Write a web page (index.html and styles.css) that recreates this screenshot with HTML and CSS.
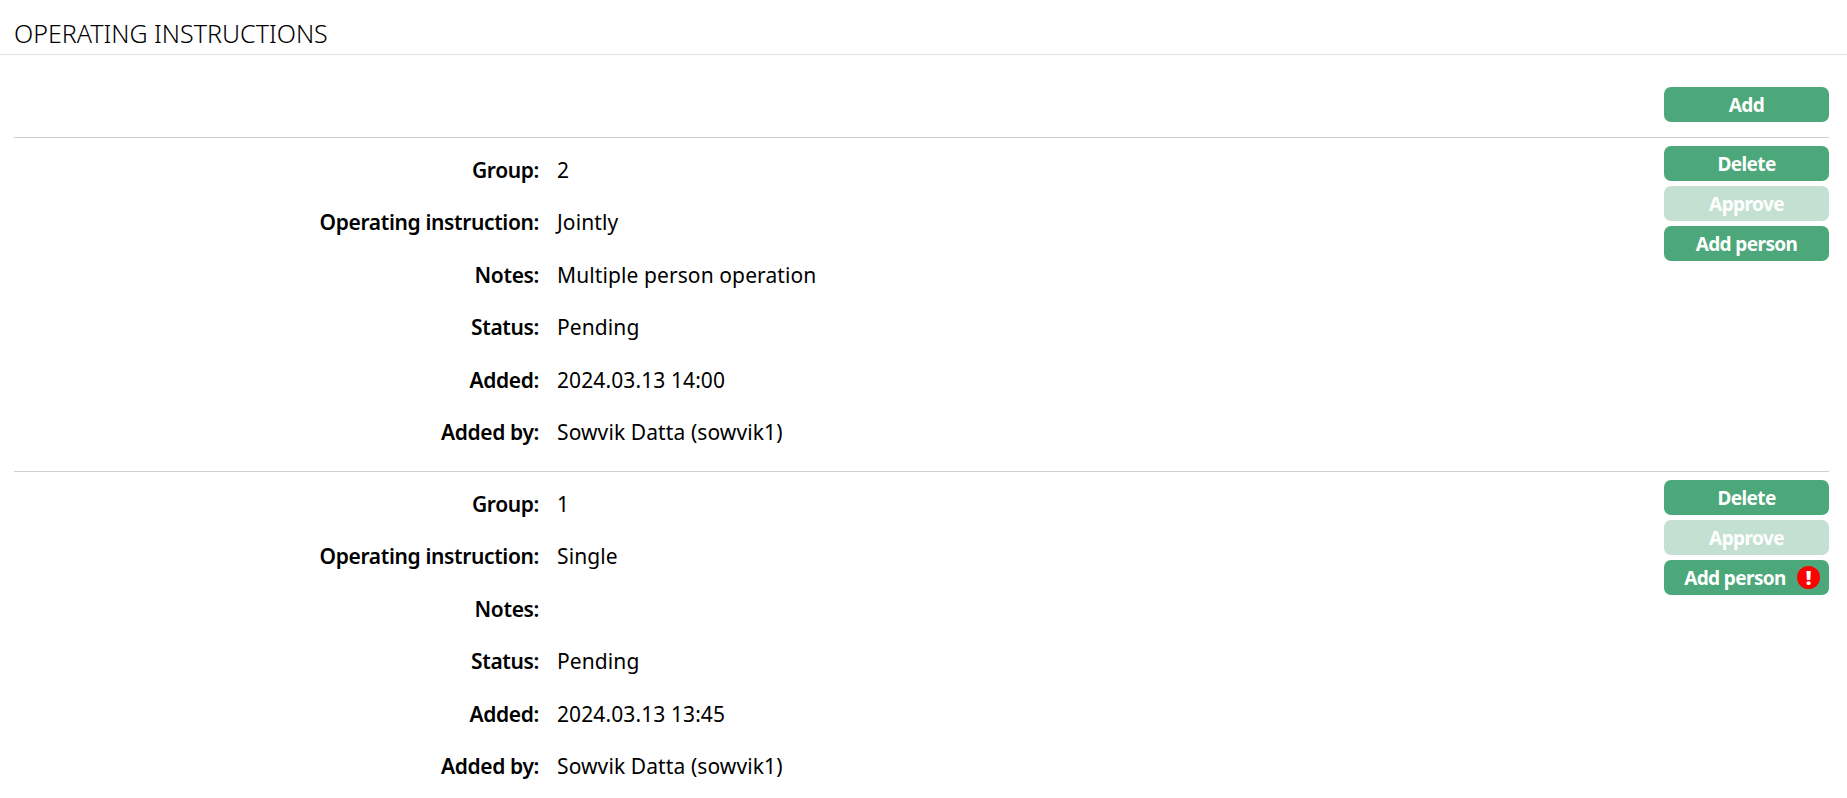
FILE: index.html
```html
<!DOCTYPE html>
<html lang="en">
<head>
  <meta charset="UTF-8" />
  <title>Operating Instructions</title>
  <link rel="stylesheet" href="styles.css">
</head>
<body>

  <div class="page-title">OPERATING INSTRUCTIONS</div>

  <div class="content">
    <div class="toolbar">
      <button class="btn">Add</button>
    </div>

    <!-- Group 2 -->
    <div class="item">
      <dl class="details">
        <dt>Group:</dt><dd>2</dd>
        <dt>Operating instruction:</dt><dd>Jointly</dd>
        <dt>Notes:</dt><dd>Multiple person operation</dd>
        <dt>Status:</dt><dd>Pending</dd>
        <dt>Added:</dt><dd>2024.03.13 14:00</dd>
        <dt>Added by:</dt><dd>Sowvik Datta (sowvik1)</dd>
      </dl>
      <div class="actions">
        <button class="btn">Delete</button>
        <button class="btn disabled">Approve</button>
        <button class="btn">Add person</button>
      </div>
    </div>

    <!-- Group 1 -->
    <div class="item">
      <dl class="details">
        <dt>Group:</dt><dd>1</dd>
        <dt>Operating instruction:</dt><dd>Single</dd>
        <dt>Notes:</dt><dd></dd>
        <dt>Status:</dt><dd>Pending</dd>
        <dt>Added:</dt><dd>2024.03.13 13:45</dd>
        <dt>Added by:</dt><dd>Sowvik Datta (sowvik1)</dd>
      </dl>
      <div class="actions">
        <button class="btn">Delete</button>
        <button class="btn disabled">Approve</button>
        <button class="btn">Add person<span class="warn">!</span></button>
      </div>
    </div>
  </div>

</body>
</html>
```

FILE: styles.css
```css
body {
  font-family: "Noto Sans", "Open Sans", sans-serif;
  color: #000;
  background-color: #fff;
  margin: 0;
}

.page-title {
  height: 55px;
  box-sizing: border-box;
  padding: 18px 0 0 14px;
  font-size: 25px;
  font-weight: 300;
  line-height: 30px;
  border-bottom: 1px solid #e2e2e2;
}

.content {
  padding: 32px 18px 0 14px;
}

.toolbar {
  display: flex;
  justify-content: flex-end;
  padding-bottom: 15px;
}

.item {
  display: flex;
  justify-content: space-between;
  border-top: 1px solid #d0d0d0;
  height: 333px;
}

.details {
  display: grid;
  grid-template-columns: 525px 1fr;
  grid-auto-rows: 52.4px;
  column-gap: 18px;
  margin: 6px 0 0;
  font-size: 21px;
  line-height: 52.4px;
}

.details dt {
  font-weight: 600;
  letter-spacing: -0.36px;
  text-align: right;
}

.details dd {
  margin: 0;
  font-weight: 400;
  letter-spacing: 0.1px;
}

.actions {
  display: flex;
  flex-direction: column;
  gap: 5px;
  margin-top: 8px;
}

.btn {
  display: flex;
  align-items: center;
  justify-content: center;
  width: 165px;
  height: 35px;
  padding: 0;
  background-color: #4ca87a;
  border: none;
  border-radius: 7px;
  color: #fff;
  font-family: inherit;
  font-size: 19px;
  font-weight: 700;
  letter-spacing: -0.6px;
}

.btn.disabled {
  background-color: #c4e0d2;
}

.warn {
  width: 23px;
  height: 23px;
  margin: 0 -11px 0 11px;
  border-radius: 50%;
  background-color: #f00;
  color: #fff;
  font-size: 20px;
  font-weight: 900;
  line-height: 23px;
  text-align: center;
}
```
